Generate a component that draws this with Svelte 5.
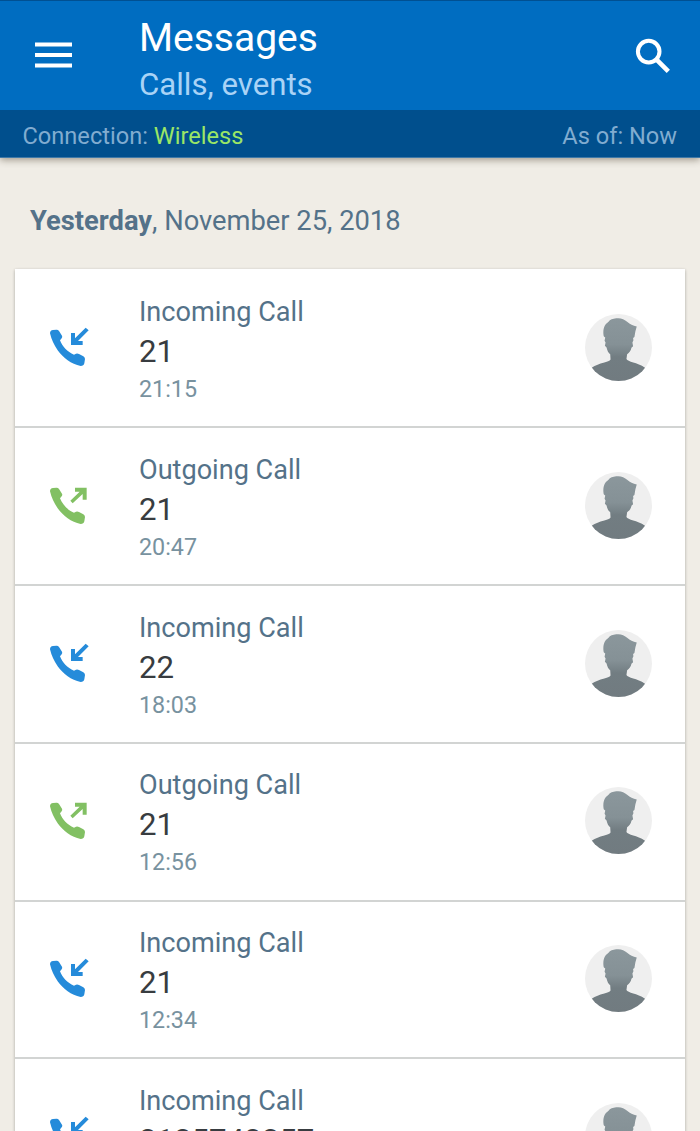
<script>
  const calls = [
    { type: 'Incoming', number: '21', time: '21:15' },
    { type: 'Outgoing', number: '21', time: '20:47' },
    { type: 'Incoming', number: '22', time: '18:03' },
    { type: 'Outgoing', number: '21', time: '12:56' },
    { type: 'Incoming', number: '21', time: '12:34' },
    { type: 'Incoming', number: '2125743257', time: '' }
  ];
</script>

<div class="screen">
  <header>
    <div class="toolbar">
      <svg class="menu" viewBox="0 0 37 26"><path d="M0 0.500h37v4H0zM0 11h37v4H0zM0 21.500h37v4H0z" fill="#fff" /></svg>
      <div class="titles">
        <h1>Messages</h1>
        <div class="subtitle">Calls, events</div>
      </div>
      <svg class="search" viewBox="0 0 36 36" fill="none" stroke="#fff">
        <circle cx="13.7" cy="13.6" r="10.8" stroke-width="4" />
        <path d="M21.8 21.8L33.3 33.3" stroke-width="4.6" />
      </svg>
    </div>
    <div class="status">
      <div>Connection: <span class="wireless">Wireless</span></div>
      <div>As of: Now</div>
    </div>
  </header>

  <div class="date"><b>Yesterday</b>, November 25, 2018</div>

  <main>
    {#each calls as call}
      <article>
        <svg class="phone" class:outgoing={call.type === 'Outgoing'} viewBox="0 0 180 180" fill="currentColor">
          <path d="M30 55Q30 46 39 45L49 44Q54 43.500 57 48L66 62Q68 66 65 70L60 76C67 94 82 111 102 119L108 116Q112 114 117 117L130 124Q135 127 135 132L133 145Q131 153 122 153C94 148 69 128 53 106Q36 81 30 55Z" />
          {#if call.type === 'Outgoing'}
            <path d="M105 44H140V80H128V63L98 91L91 83L119 56H105Z" />
          {:else}
            <path d="M137 38L146 46L114 78H128V90H93V54H105V70Z" />
          {/if}
        </svg>
        <div class="details">
          <div class="type">{call.type} Call</div>
          <div class="number">{call.number}</div>
          <div class="time">{call.time}</div>
        </div>
        <svg class="avatar" viewBox="30 26 202 202">
          <defs>
            <linearGradient id="portrait" x1="0" y1="38" x2="0" y2="228" gradientUnits="userSpaceOnUse">
              <stop offset="0" stop-color="#8b979c" />
              <stop offset="0.42" stop-color="#859196" />
              <stop offset="0.62" stop-color="#727d82" />
              <stop offset="1" stop-color="#717b80" />
            </linearGradient>
            <clipPath id="disc"><circle cx="131" cy="127" r="101" /></clipPath>
          </defs>
          <circle cx="131" cy="127" r="101" fill="#efefef" />
          <path clip-path="url(#disc)" fill="url(#portrait)" d="M86 91C84 77 86 65 93 56L101 49C105 43 114 40 124 39C137 37 148 41 158 50C165 57 175 61 186 64L182 78L179 95L175 98L176 105L173 112L175 123L170 128C169 137 163 143 157 147L155 162C159 171 187 172 211 188V230H50V188C73 172 103 172 107 163L106 147C100 143 97 136 95 127L90 122L92 112L89 107L91 97L87 94Z" />
        </svg>
      </article>
    {/each}
  </main>
</div>

<style>
  :global(body) { margin: 0; background: #f0ede6; }
  .screen {
    width: 700px;
    height: 1131px;
    overflow: hidden;
    background: #f0ede6;
    font-family: Roboto, sans-serif;
  }
  header {
    height: 158px;
    border-top: 1px solid #005092;
    box-sizing: border-box;
    box-shadow: 0 2px 7px rgba(60, 50, 30, 0.45);
    border-bottom: 1px solid #3f79a8;
  }
  .toolbar {
    height: 109px;
    box-sizing: border-box;
    background: #006dc1;
    display: flex;
    align-items: flex-start;
    padding: 0 29px 0 35px;
  }
  .menu { width: 37px; height: 26px; margin-top: 41px; }
  .titles { flex: 1; padding: 13px 0 0 67px; }
  h1 { margin: 0; font-size: 39px; line-height: 48px; font-weight: 400; color: #fff; }
  .subtitle { font-size: 31.200px; line-height: 45px; color: #a9d3f6; }
  .search { width: 36px; height: 36px; margin-top: 36.500px; }
  .status {
    height: 47px;
    box-sizing: border-box;
    padding: 4px 23px 0 22.500px;
    background: #004f8d;
    display: flex;
    justify-content: space-between;
    align-items: center;
    font-size: 23.600px;
    color: #81acd0;
  }
  .wireless { color: #9ae666; }
  .date {
    box-sizing: border-box;
    padding: 46px 30px 0;
    height: 111px;
    font-size: 27.300px;
    line-height: 34px;
    color: #547289;
  }
  main {
    margin: 0 15px;
    background: #fff;
    box-shadow: 0 1px 3px rgba(0, 0, 0, 0.3);
  }
  article {
    height: 157.750px;
    box-sizing: border-box;
    display: flex;
    align-items: flex-start;
  }
  article:first-child { height: 157.250px; }
  article + article { border-top: 2px solid #d2d4d3; }
  .phone { width: 60px; height: 60px; margin: 46px 0 0 25px; color: #258bda; }
  .outgoing { color: #82c063; }
  .details { flex: 1; padding: 26px 0 0 39px; }
  article + article .phone { margin-top: 44.500px; }
  article + article .details { padding-top: 24.500px; }
  article + article .avatar { margin-top: 43.500px; }
  .type { font-size: 27.100px; line-height: 34px; color: #547289; }
  .number { font-size: 31.200px; line-height: 45px; color: #383c40; }
  .time { font-size: 23.300px; line-height: 30px; color: #78929f; }
  .avatar { width: 67px; height: 67px; margin: 45px 33px 0 0; }
</style>
